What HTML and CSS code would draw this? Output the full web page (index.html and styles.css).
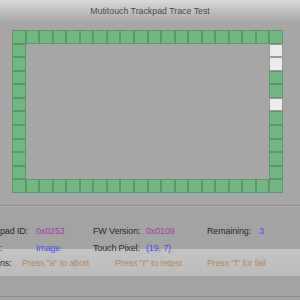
FILE: index.html
```html
<!DOCTYPE html>
<html>
<head>
<meta charset="utf-8">
<link rel="stylesheet" href="styles.css">
</head>
<body>
<div class="window">
  <div class="titlebar">Mutitouch Trackpad Trace Test</div>
  <div class="canvas">
    <div class="grid">
      <div class="c"></div><div class="c"></div><div class="c"></div><div class="c"></div><div class="c"></div>
      <div class="c"></div><div class="c"></div><div class="c"></div><div class="c"></div><div class="c"></div>
      <div class="c"></div><div class="c"></div><div class="c"></div><div class="c"></div><div class="c"></div>
      <div class="c"></div><div class="c"></div><div class="c"></div><div class="c"></div><div class="c"></div>

      <div class="c l"></div><div class="c r off"></div>
      <div class="c l"></div><div class="c r off"></div>
      <div class="c l"></div><div class="c r"></div>
      <div class="c l"></div><div class="c r"></div>
      <div class="c l"></div><div class="c r off"></div>
      <div class="c l"></div><div class="c r"></div>
      <div class="c l"></div><div class="c r"></div>
      <div class="c l"></div><div class="c r"></div>
      <div class="c l"></div><div class="c r"></div>
      <div class="c l"></div><div class="c r"></div>

      <div class="c"></div><div class="c"></div><div class="c"></div><div class="c"></div><div class="c"></div>
      <div class="c"></div><div class="c"></div><div class="c"></div><div class="c"></div><div class="c"></div>
      <div class="c"></div><div class="c"></div><div class="c"></div><div class="c"></div><div class="c"></div>
      <div class="c"></div><div class="c"></div><div class="c"></div><div class="c"></div><div class="c"></div>
    </div>
  </div>
  <div class="info">
    <div class="row"><span class="lbl w1">pad ID:</span><span class="val mag w2">0x0253</span><span class="lbl w3">FW Version:</span><span class="val mag w4">0x0109</span><span class="lbl w5">Remaining:</span><span class="val blue">3</span></div>
    <div class="row"><span class="lbl w1">:</span><span class="val blue w2">Image</span><span class="lbl w3">Touch Pixel:</span><span class="val blue w4">(19, 7)</span></div>
  </div>
  <div class="band">
    <span class="lbl k1">ns:</span>
    <span class="hint k2">Press "a" to abort</span>
    <span class="hint k3">Press "r" to retest</span>
    <span class="hint">Press "f" for fail</span>
  </div>
  <div class="footer"></div>
</div>
</body>
</html>
```
FILE: styles.css
```css
html, body {
  margin: 0;
  padding: 0;
}
body {
  width: 300px;
  height: 300px;
  overflow: hidden;
  background: #a6a6a6;
  font-family: "Liberation Sans", Arial, sans-serif;
}
.window {
  width: 300px;
  height: 300px;
}
.titlebar {
  height: 22px;
  line-height: 22px;
  text-align: center;
  font-size: 8.8px;
  color: #4a4a4a;
  background: linear-gradient(#d9d9d9, #a7a7a7);
}
.canvas {
  height: 183px;
  padding: 8px 0 0 12px;
  box-sizing: border-box;
  background: #a6a6a6;
}
.grid {
  display: grid;
  grid-template-columns: repeat(20, 1fr);
  grid-template-rows: repeat(12, 1fr);
  width: 271px;
  height: 163px;
}
.c {
  background: #72b782;
  box-shadow: inset 0 0 0 1px #5e9569;
}
.c.l { grid-column: 1; }
.c.r { grid-column: 20; }
.c.off {
  background: #ececec;
  box-shadow: inset 0 0 0 1px #9a9a9a;
}
.info {
  height: 44px;
  box-sizing: border-box;
  padding-top: 17px;
  border-top: 1px solid #8e8e8e;
  box-shadow: inset 0 1px 0 #b4b4b4;
  background: #a3a3a3;
  font-size: 9px;
  letter-spacing: -0.15px;
}
.row {
  height: 16.5px;
  line-height: 16.5px;
  white-space: nowrap;
}
.row span {
  display: inline-block;
  vertical-align: top;
}
.w1 { width: 36px; }
.w2 { width: 57px; }
.w3 { width: 53px; }
.w4 { width: 61px; }
.w5 { width: 52px; }
.lbl { color: #2b2b2b; }
.mag { color: #a53aa6; }
.blue { color: #4b4bf2; }
.band {
  display: flex;
  align-items: center;
  height: 27px;
  background: linear-gradient(#c3c3c3, #bbbbbb);
  font-size: 9px;
  letter-spacing: -0.15px;
  white-space: nowrap;
}
.k1 { width: 22px; }
.k2 { width: 93px; }
.k3 { width: 92px; }
.hint { color: #b78a5e; }
.footer {
  height: 20px;
  background: #a4a4a4;
  border-bottom: 1px solid #8c8c8c;
}
```
